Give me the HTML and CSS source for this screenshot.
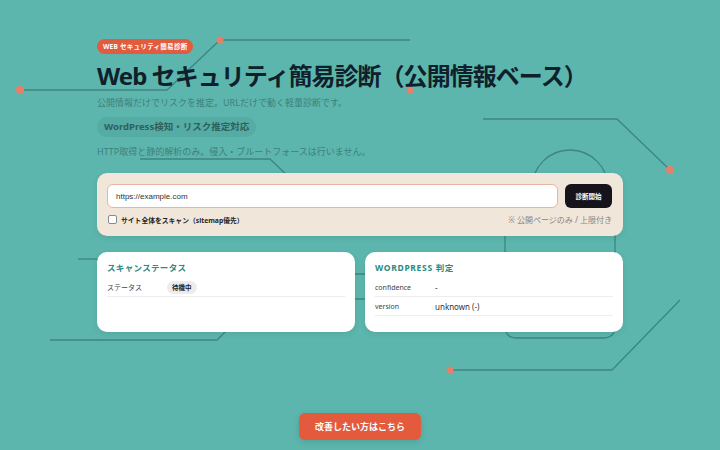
FILE: index.html
```html
<!DOCTYPE html>
<html lang="ja">

<head>
    <meta charset="UTF-8">
    <meta name="viewport" content="width=device-width, initial-scale=1.0">
    <title>Web セキュリティ簡易診断</title>
    <link rel="stylesheet" href="styles.css">
</head>

<body>
    <!-- 背景の回路風ライン -->
    <svg class="circuit" width="720" height="450" viewBox="0 0 720 450" aria-hidden="true">
        <g fill="none" stroke="#3f8580" stroke-width="1.3">
            <polyline points="20,90 167,90 220,40 410,40" />
            <polyline points="483,119 617,119 670,170" />
            <polyline points="140,159 270,159 292,180" />
            <circle cx="570" cy="188" r="38" />
            <path d="M505,220 V326 Q505,338 517,338 H603 Q615,338 615,326 V220" />
            <polyline points="450,370 612,370 680,300" />
            <polyline points="50,340 217,340 232,325" />
            <line x1="78" y1="259" x2="110" y2="259" />
            <line x1="320" y1="274" x2="400" y2="274" />
            <line x1="320" y1="299" x2="400" y2="299" />
        </g>
        <g fill="#e7806a">
            <circle cx="20" cy="90" r="4" />
            <circle cx="220" cy="40" r="3.5" />
            <circle cx="410" cy="90" r="3.5" />
            <circle cx="670" cy="170" r="4" />
            <circle cx="450" cy="370" r="3.5" />
        </g>
    </svg>

    <main class="page">
        <header class="hero">
            <span class="badge">WEB セキュリティ簡易診断</span>
            <h1>Web セキュリティ簡易診断（公開情報ベース）</h1>
            <p class="lead">公開情報だけでリスクを推定。URLだけで動く軽量診断です。</p>
            <span class="feature">WordPress検知・リスク推定対応</span>
            <p class="note">HTTP取得と静的解析のみ。侵入・ブルートフォースは行いません。</p>
        </header>

        <form class="scan-form">
            <div class="scan-row">
                <input type="text" class="url-input" value="https://example.com">
                <button type="button" class="scan-button">診断開始</button>
            </div>
            <div class="option-row">
                <label class="check">
                    <input type="checkbox">
                    <span>サイト全体をスキャン（sitemap優先）</span>
                </label>
                <span class="limit">※ 公開ページのみ / 上限付き</span>
            </div>
        </form>

        <section class="panels">
            <div class="panel">
                <h2>スキャンステータス</h2>
                <div class="row">
                    <span class="key">ステータス</span>
                    <span class="chip">待機中</span>
                </div>
            </div>
            <div class="panel">
                <h2 class="caps">WORDPRESS 判定</h2>
                <div class="row">
                    <span class="key">confidence</span>
                    <span class="val">-</span>
                </div>
                <div class="row">
                    <span class="key">version</span>
                    <span class="val">unknown (-)</span>
                </div>
            </div>
        </section>

        <div class="cta-wrap">
            <a href="#" class="cta">改善したい方はこちら</a>
        </div>
    </main>
</body>

</html>
```

FILE: styles.css
```css
body {
    font-family: "Noto Sans", "Noto Sans CJK JP", sans-serif;
    background-color: #5cb6ad;
    color: #12222a;
    margin: 0;
    height: 450px;
    overflow: hidden;
    position: relative;
}

.circuit {
    position: absolute;
    top: 0;
    left: 0;
    z-index: 0;
}

.page {
    position: relative;
    z-index: 1;
    width: 526px;
    margin: 0 auto;
    padding-top: 39px;
}

.hero {
    display: flex;
    flex-direction: column;
    align-items: flex-start;
}

.badge {
    height: 15px;
    line-height: 15px;
    padding: 0 6px;
    font-size: 6.6px;
    font-weight: bold;
    letter-spacing: 0.03em;
    color: #fff;
    background-color: #e35b3f;
    border-radius: 8px;
}

h1 {
    font-size: 24px;
    line-height: 29px;
    margin: 7px 0 0;
    color: #10202a;
    letter-spacing: -0.04em;
}

.lead,
.note {
    font-size: 9px;
    line-height: 14px;
    color: #3f7f7b;
    margin: 6px 0 0;
}

.note {
    margin-top: 8px;
}

.feature {
    margin-top: 7px;
    height: 20px;
    line-height: 20px;
    padding: 0 7px;
    font-size: 9.5px;
    font-weight: bold;
    color: #2f605c;
    background-color: #54aca4;
    border-radius: 10px;
}

.scan-form {
    margin-top: 14px;
    background-color: #f1e6da;
    border-radius: 10px;
    padding: 11px 11px 11px 10px;
    box-shadow: 0 2px 6px rgba(0, 0, 0, 0.08);
}

.scan-row {
    display: flex;
    gap: 7px;
}

.url-input {
    flex: 1;
    height: 24px;
    box-sizing: border-box;
    border: 1.5px solid #e8b5a2;
    border-radius: 6px;
    padding: 0 8px;
    font-family: "Liberation Sans", Arial, sans-serif;
    font-size: 8px;
    color: #333;
    background-color: #fff;
    outline: none;
}

.scan-button {
    width: 47px;
    height: 24px;
    border: none;
    border-radius: 6px;
    background-color: #16131b;
    color: #fff;
    font-family: "Noto Sans CJK JP", sans-serif;
    font-size: 6.5px;
    font-weight: bold;
    padding: 0;
}

.option-row {
    display: flex;
    justify-content: space-between;
    align-items: center;
    margin-top: 6px;
    height: 11px;
}

.check {
    display: flex;
    align-items: center;
    gap: 4px;
    font-size: 6.8px;
    font-weight: bold;
    color: #1f1f1f;
}

.check input {
    margin: 0 0 0 1px;
    width: 9px;
    height: 9px;
    appearance: none;
    border: 1px solid #8a8a8a;
    border-radius: 2px;
    background-color: #fff;
}

.limit {
    font-size: 8px;
    color: #8a8580;
}

.panels {
    margin-top: 16px;
    display: grid;
    grid-template-columns: 1fr 1fr;
    gap: 10px;
}

.panel {
    background-color: #fff;
    border-radius: 10px;
    height: 80px;
    box-sizing: border-box;
    padding: 10px 10px 0;
    box-shadow: 0 2px 6px rgba(0, 0, 0, 0.08);
}

.panel h2 {
    font-size: 8.5px;
    line-height: 12px;
    margin: 0 0 4px;
    color: #2b8a81;
    letter-spacing: 0.04em;
}

.panel h2.caps {
    letter-spacing: 0.08em;
}

.row {
    display: flex;
    align-items: center;
    height: 19px;
    box-sizing: border-box;
    border-bottom: 1px solid #ededed;
}

.key {
    width: 60px;
    flex-shrink: 0;
    font-size: 7px;
    color: #444;
}

.val {
    font-size: 8px;
    color: #333;
}

.chip {
    height: 13px;
    line-height: 13px;
    padding: 0 5px;
    border-radius: 7px;
    background-color: #ececec;
    font-size: 6.5px;
    font-weight: bold;
    color: #222;
}

.cta-wrap {
    margin-top: 81px;
    display: flex;
    justify-content: center;
}

.cta {
    display: inline-block;
    width: 122px;
    height: 27px;
    line-height: 27px;
    text-align: center;
    border-radius: 6px;
    background-color: #e35a3c;
    color: #fff;
    font-size: 9px;
    font-weight: bold;
    text-decoration: none;
    box-shadow: 0 2px 6px rgba(0, 0, 0, 0.12);
}
```
